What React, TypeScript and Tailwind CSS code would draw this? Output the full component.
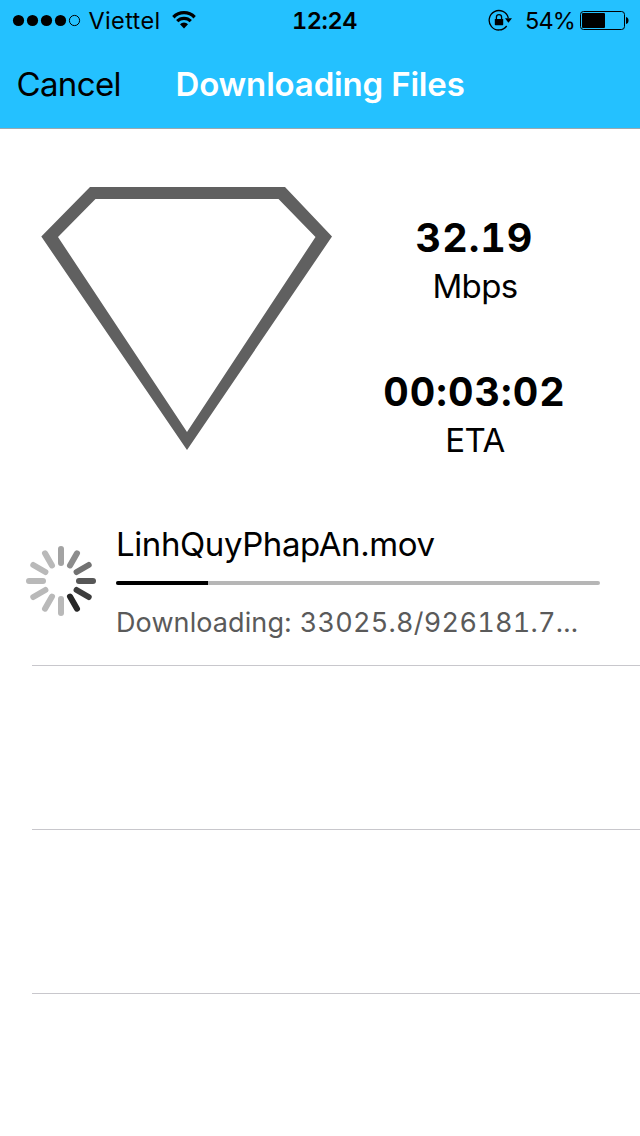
import React from "react";

const spokes = [
  "#a3a3a3", "#8c8c8c", "#727272", "#575757", "#3d3d3d", "#272727",
  "#b9b9b9", "#b9b9b9", "#b9b9b9", "#b9b9b9", "#b9b9b9", "#b9b9b9",
];

function StatusBar() {
  return (
    <div className="flex h-10 items-center pl-3 pr-2.5 text-[23.5px] leading-10">
      <svg className="h-10 w-[70px] shrink-0" viewBox="0 0 70 40">
        <circle cx="6.5" cy="20.5" r="5.6" />
        <circle cx="20.5" cy="20.5" r="5.6" />
        <circle cx="34.5" cy="20.5" r="5.6" />
        <circle cx="48.5" cy="20.5" r="5.6" />
        <circle cx="62.5" cy="20.5" r="5.1" fill="none" stroke="#000" strokeWidth="1" />
      </svg>
      <span className="ml-[6.5px] w-[76px] pt-px tracking-[0.35px]">Viettel</span>
      <svg className="ml-[6.5px] h-10 w-7 shrink-0" viewBox="0 0 28 40">
        <path d="M1.2 16.1A16.3 16.3 0 0 1 24.8 16.1L22.5 18.4A13.2 13.2 0 0 0 3.5 18.4Z" />
        <path d="M5.1 20.1A10.9 10.9 0 0 1 20.9 20.1L18.7 22.3A8 8 0 0 0 7.3 22.3Z" />
        <path d="M9 24.2A5.6 5.6 0 0 1 17 24.2L13 28.6Z" />
      </svg>
      <span className="ml-[93px] w-[70px] pt-px font-semibold tracking-[-0.4px] tabular-nums">12:24</span>
      <svg className="ml-[126px] h-10 w-6 shrink-0" viewBox="0 0 24 40">
        <path d="M20.3 18A9.7 9.7 0 1 0 18.7 26" fill="none" stroke="#000" strokeWidth="1.3" />
        <path d="M17 18.3H24L20.4 22.7Z" />
        <rect x="6.8" y="19" width="8.4" height="6.2" rx=".6" />
        <path d="M8.4 19.5V17.2A2.6 2.6 0 0 1 13.6 17.2V19.5" fill="none" stroke="#000" strokeWidth="1.3" />
      </svg>
      <span className="ml-[13px] w-[54px] shrink-0 pt-px tracking-[-0.9px]">54%</span>
      <svg className="h-10 w-[50px] shrink-0" viewBox="0 0 50 40">
        <rect x="1.5" y="11.5" width="44" height="18" rx="3" fill="none" stroke="#000" />
        <rect x="3" y="13" width="23" height="15" rx="1" />
        <path d="M47 17Q49.5 17.5 49.5 20.5T47 24Z" />
      </svg>
    </div>
  );
}

function Stat({ value, unit }: { value: string; unit: string }) {
  return (
    <div className="flex flex-col items-center">
      <div className="h-12 text-[39.5px] font-bold leading-[48px] tracking-[1px] tabular-nums">{value}</div>
      <div className="h-12 pl-px text-[33px] leading-[48px] tracking-[-0.6px]">{unit}</div>
    </div>
  );
}

export default function App() {
  return (
    <div className="h-[1136px] w-[640px] overflow-hidden bg-white font-['Inter',sans-serif] text-black">
      <header className="h-[129px] border-b border-[#9ba9b0] bg-[#24c1ff]">
        <StatusBar />
        <div className="flex h-[88px] items-center pl-[16.5px] text-[33px] leading-[88px]">
          <span className="w-[159px] tracking-[-0.65px]">Cancel</span>
          <h1 className="font-semibold tracking-[-0.17px] text-white">Downloading Files</h1>
        </div>
      </header>

      <section className="flex h-[373px]">
        <svg className="h-[373px] w-[340px] shrink-0" viewBox="0 129 340 373">
          <path d="M90 187H285L332 236.5L187 450L41.3 236.5ZM95.5 199L58 237L187 432L315.5 237L278.5 199Z" fill="#606060" fillRule="evenodd" />
        </svg>
        <div className="flex w-[269px] flex-col gap-[58px] pt-[85px]">
          <Stat value="32.19" unit="Mbps" />
          <Stat value="00:03:02" unit="ETA" />
        </div>
      </section>

      <section className="pl-8">
        <div className="flex h-[164px] border-b border-[#c8c7cc]">
          <svg className="-ml-2 mt-[42px] h-[74px] w-[74px] shrink-0" viewBox="-37 -37 74 74">
            {spokes.map((color, i) => (
              <rect key={i} x="-3" y="-35" width="6" height="20" rx="3" fill={color} transform={`rotate(${i * 30})`} />
            ))}
          </svg>
          <div className="ml-[18px] w-[484px]">
            <div className="mt-[22px] h-10 text-[33px] leading-10 tracking-[-0.42px]">LinhQuyPhapAn.mov</div>
            <div className="mt-[17px] h-1 overflow-hidden rounded-full bg-[#b6b6b6]">
              <div className="h-full w-[92px] bg-black" />
            </div>
            <div className="mt-[18px] h-10 whitespace-nowrap text-[27px] leading-10 tracking-[0.1px] text-[#5a5a5a]">
              Downloading: <span className="tracking-[0.27px] tabular-nums">33025.8/926181.7...</span>
            </div>
          </div>
        </div>
        <div className="h-[164px] border-b border-[#c8c7cc]" />
        <div className="h-[164px] border-b border-[#c8c7cc]" />
      </section>
    </div>
  );
}
